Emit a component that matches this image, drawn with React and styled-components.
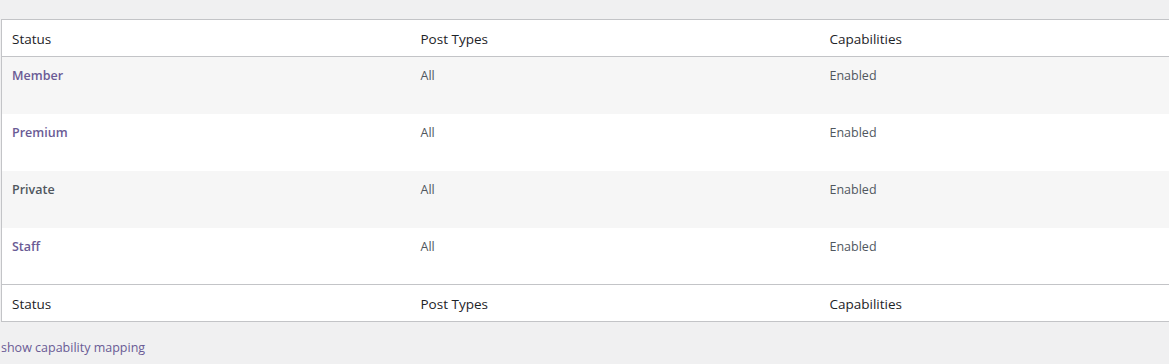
import React from "react";
import styled, { createGlobalStyle } from "styled-components";

const GlobalStyle = createGlobalStyle`
  html, body {
    margin: 0;
    padding: 0;
    overflow: hidden;
    background: #f0f0f1;
  }
  body {
    font-family: "Open Sans", "Noto Sans", sans-serif;
    color: #3c434a;
  }
`;

const Wrap = styled.div`
  padding: 19px 0 0 1px;
  width: 1240px;
`;

const Table = styled.table`
  width: 1228px;
  table-layout: fixed;
  border-collapse: collapse;
  border: 1px solid #c3c4c7;
  background: #fff;
`;

const HeadCell = styled.th`
  text-align: left;
  font-weight: 400;
  font-size: 13.5px;
  color: #1d2327;
  height: 37px;
  padding: ${({ $foot }) => ($foot ? "1px 10px 0" : "2px 10px 0")};
  box-sizing: border-box;
  border-${({ $foot }) => ($foot ? "top" : "bottom")}: 1px solid #c3c4c7;
`;

const Row = styled.tr`
  background: ${({ $odd }) => ($odd ? "#f6f6f6" : "#fff")};
`;

const Cell = styled.td`
  vertical-align: top;
  height: 57px;
  box-sizing: border-box;
  padding: 10px 10px 0;
  font-size: 12.5px;
  line-height: 18px;
  color: #50575e;
`;

const Title = styled.a`
  font-size: 12.5px;
  font-weight: 600;
  text-decoration: none;
  color: ${({ $plain }) => ($plain ? "#50575e" : "#6a5b95")};
`;

const Toggle = styled.a`
  display: block;
  margin-top: 17px;
  font-size: 12.5px;
  color: #6a5b95;
  text-decoration: none;
`;

const statuses = [
  { name: "Member" },
  { name: "Premium" },
  { name: "Private", plain: true },
  { name: "Staff" },
];

const Headings = ({ foot }) => (
  <tr>
    <HeadCell $foot={foot}>Status</HeadCell>
    <HeadCell $foot={foot}>Post Types</HeadCell>
    <HeadCell $foot={foot}>Capabilities</HeadCell>
  </tr>
);

export default function App() {
  return (
    <Wrap>
      <GlobalStyle />
      <Table>
        <thead>
          <Headings />
        </thead>
        <tbody>
          {statuses.map((s, i) => (
            <Row key={s.name} $odd={i % 2 === 0}>
              <Cell>
                <Title href="#" $plain={s.plain}>
                  {s.name}
                </Title>
              </Cell>
              <Cell>All</Cell>
              <Cell>Enabled</Cell>
            </Row>
          ))}
        </tbody>
        <tfoot>
          <Headings foot />
        </tfoot>
      </Table>
      <Toggle href="#">show capability mapping</Toggle>
    </Wrap>
  );
}
